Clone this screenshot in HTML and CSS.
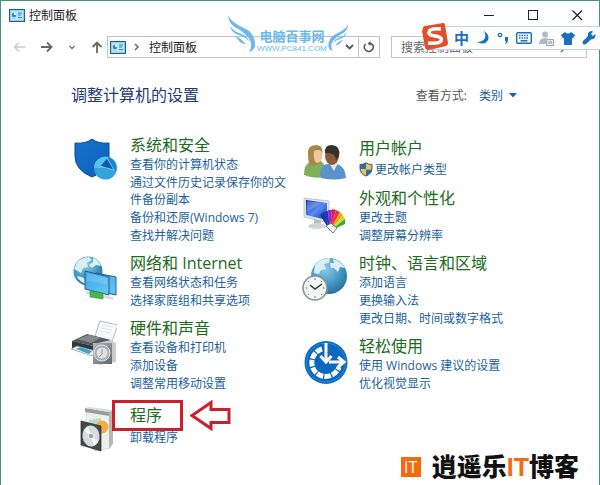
FILE: index.html
```html
<!DOCTYPE html>
<html lang="zh-CN">
<head>
  <meta charset="UTF-8">
  <meta name="viewport" content="width=device-width, initial-scale=1.0">
  <title>控制面板</title>
  <link rel="stylesheet" href="styles.css">
</head>
<body>
  <!-- shared shapes -->
  <svg width="0" height="0" class="defs" aria-hidden="true">
    <defs>
      <symbol id="panel" viewBox="0 0 16 13">
        <rect x="0.5" y="0.5" width="15" height="12" fill="#8fd0f2" stroke="#1f5f8c"/>
        <rect x="2" y="2" width="12" height="9" fill="#b9e5fa"/>
        <circle cx="5" cy="6" r="2.2" fill="#2b86bd"/>
        <path d="M5 6V3.800A2.200 2.200 0 0 1 7.200 6Z" fill="#fff"/>
        <path d="M9 4h4M9 6h3M9 8.500h4" stroke="#2b86bd"/>
        <path d="M3 9.500h4" stroke="#e8c86a"/>
      </symbol>
      <radialGradient id="globe" cx="0.4" cy="0.3" r="0.8">
        <stop offset="0" stop-color="#8ccbe8"/>
        <stop offset="0.6" stop-color="#3f93bd"/>
        <stop offset="1" stop-color="#1d678f"/>
      </radialGradient>
      <linearGradient id="shield" x1="0" y1="0" x2="1" y2="1">
        <stop offset="0" stop-color="#1673cc"/>
        <stop offset="1" stop-color="#0d60b8"/>
      </linearGradient>
      <linearGradient id="screen" x1="0" y1="0" x2="1" y2="1">
        <stop offset="0" stop-color="#3aa4e8"/>
        <stop offset="1" stop-color="#69c8f5"/>
      </linearGradient>
      <linearGradient id="monitor" x1="0" y1="0" x2="1" y2="1">
        <stop offset="0" stop-color="#0a1fa8"/>
        <stop offset="0.5" stop-color="#5a8cf0"/>
        <stop offset="1" stop-color="#1030c0"/>
      </linearGradient>
      <linearGradient id="metal" x1="0" y1="0" x2="1" y2="1">
        <stop offset="0" stop-color="#b5b9bd"/>
        <stop offset="1" stop-color="#5f6468"/>
      </linearGradient>
    </defs>
  </svg>

  <div class="window">
    <header class="titlebar">
      <svg class="panel-icon"><use href="#panel"/></svg>
      <span class="caption">控制面板</span>
      <div class="window-buttons">
        <button type="button" aria-label="最小化"><svg width="11" height="11"><path d="M0 5.500h10" stroke="#222"/></svg></button>
        <button type="button" aria-label="最大化"><svg width="11" height="11"><rect x="0.5" y="0.5" width="9" height="9" fill="none" stroke="#222"/></svg></button>
        <button type="button" aria-label="关闭"><svg width="11" height="11"><path d="M0.500 0.500l9.500 9.500M10 0.500l-9.500 9.500" stroke="#222" stroke-width="1.200"/></svg></button>
      </div>
    </header>

    <nav class="toolbar">
      <button type="button" class="nav-button" aria-label="后退"><svg width="12" height="12"><path d="M12 6H1.500M6 1.500L1.500 6L6 10.500" fill="none" stroke="#c9c9c9" stroke-width="1.500"/></svg></button>
      <button type="button" class="nav-button" aria-label="前进"><svg width="12" height="12"><path d="M0 6h10.500M6 1.500L10.500 6L6 10.500" fill="none" stroke="#666" stroke-width="1.800"/></svg></button>
      <button type="button" class="nav-button" aria-label="最近"><svg width="6" height="5"><path d="M0.500 1L3 3.500L5.500 1" fill="none" stroke="#777" stroke-width="1.400"/></svg></button>
      <button type="button" class="nav-button" aria-label="向上"><svg width="12" height="12"><path d="M6 12V1.500M1.500 6L6 1.500L10.500 6" fill="none" stroke="#666" stroke-width="1.800"/></svg></button>

      <div class="address">
        <svg class="panel-icon"><use href="#panel"/></svg>
        <svg class="crumb" width="5" height="8"><path d="M1 1l3 3l-3 3" fill="none" stroke="#666" stroke-width="1.500"/></svg>
        <span class="path">控制面板</span>
        <button type="button" class="history" aria-label="历史"><svg width="9" height="6"><path d="M1 1l3.500 3.500L8 1" fill="none" stroke="#555" stroke-width="1.800"/></svg></button>
        <button type="button" class="refresh" aria-label="刷新"><svg width="12" height="12"><path d="M2.500 3A4.400 4.400 0 1 0 9.500 3.500Q8.500 2.500 6 2.500" fill="none" stroke="#555" stroke-width="1.500"/><path d="M7.500 0L4.500 2.500L7.500 5Z" fill="#555"/></svg></button>
      </div>
      <div class="search">
        <input type="text" placeholder="搜索控制面板" aria-label="搜索控制面板">
        <svg width="12" height="12"><circle cx="7.500" cy="4.500" r="3.500" fill="none" stroke="#666" stroke-width="1.300"/><path d="M5 7L1 11" stroke="#666" stroke-width="1.600"/></svg>
      </div>
    </nav>

    <main class="content">
      <div class="heading-row">
        <h1>调整计算机的设置</h1>
        <div class="view-by">
          <span>查看方式:</span>
          <a href="#">类别<svg width="8" height="5"><path d="M0 0h8L4 4.500Z" fill="#1565a8"/></svg></a>
        </div>
      </div>

      <div class="columns">
        <div class="column left">
          <section class="category">
            <svg class="icon" viewBox="0 0 46 48">
              <path d="M4 8Q15 9 21 4Q27 9 38 8V23Q37 36 21 42Q4 35 4 21Z" fill="url(#shield)" stroke="#0c4a8c"/>
              <circle cx="34.500" cy="33" r="11.500" fill="#35a3de"/>
              <path d="M23 33A11.500 11.500 0 0 1 37 22L34 33Z" fill="#5cc0ee"/>
              <path d="M37 22A11.500 11.500 0 0 1 45 36L40 31Z" fill="#1c86cc"/>
              <path d="M29 31l7-8l7 12Z" fill="#0f5cab"/>
              <path d="M29 31L36 23L43 35Z" fill="none" stroke="#7fd2f5" stroke-width="0.800"/>
            </svg>
            <div class="text">
              <h2><a href="#">系统和安全</a></h2>
              <a href="#">查看你的计算机状态</a>
              <a href="#">通过文件历史记录保存你的文件备份副本</a>
              <a href="#">备份和还原(Windows 7)</a>
              <a href="#">查找并解决问题</a>
            </div>
          </section>

          <section class="category">
            <svg class="icon" viewBox="0 0 46 48">
              <circle cx="17" cy="18" r="14.500" fill="url(#globe)"/>
              <path d="M6 9q6-5 12-5l3 3l-5 3l1 4l-5 1l-2 5l-5-3l-2-1ZM22 5q6 2 8 8l-5-1l-4 3l-3-3l4-3ZM7 23l6 2l2 6q-6-2-9-7Z" fill="#dceef5"/>
              <path d="M25 20l20 4v18l-18-4Z" fill="url(#screen)" stroke="#235f8f"/>
              <path d="M14 18l24 6v18l-24-6Z" fill="url(#screen)" stroke="#235f8f"/>
              <path d="M16 20l20 5v6l-20-3Z" fill="#fff" opacity="0.15"/>
              <path d="M15 38l27 6v3l-27-6Z" fill="#d8dcdd"/>
              <path d="M19 38l13 2v6l-13-2Z" fill="#45b649" stroke="#2c9135" stroke-width="0.600"/>
            </svg>
            <div class="text">
              <h2><a href="#">网络和 Internet</a></h2>
              <a href="#">查看网络状态和任务</a>
              <a href="#">选择家庭组和共享选项</a>
            </div>
          </section>

          <section class="category">
            <svg class="icon" viewBox="0 0 46 48">
              <path d="M29 3l18 4l-7 19l-17-5Z" fill="#f7f8f9" stroke="#a6aaad" stroke-width="0.800"/>
              <path d="M31 7l11 2M30 10l11 2M29 13l11 2" stroke="#dcdfe1" stroke-width="0.700"/>
              <path d="M1 23L16 16L40 22L27 29Z" fill="#54585c"/>
              <path d="M1 23l26 6v10L1 31Z" fill="#33383c"/>
              <path d="M6 21l12-4l12 3l-10 5Z" fill="#83888c"/>
              <path d="M0 31l6-3l19 5l-4 5Z" fill="#e9eef0" stroke="#8a9094" stroke-width="0.600"/>
              <path d="M5 31l5-2l11 4l-3 3Z" fill="#3ba5cf"/>
              <path d="M22 26l18-4l5 3v19l-16 3l-7-3Z" fill="#c9cccf"/>
              <rect x="22" y="25" width="19" height="21" fill="url(#metal)"/>
              <circle cx="31" cy="35" r="8" fill="#a9adb1" stroke="#e3e5e6"/>
              <circle cx="31" cy="35" r="5.500" fill="#dfe1e3"/>
              <path d="M31 31v5l-3 3" fill="none" stroke="#999"/>
            </svg>
            <div class="text">
              <h2><a href="#">硬件和声音</a></h2>
              <a href="#">查看设备和打印机</a>
              <a href="#">添加设备</a>
              <a href="#">调整常用移动设置</a>
            </div>
          </section>

          <section class="category programs">
            <svg class="icon" viewBox="0 0 46 48">
              <path d="M15 5l25 4v34l-16 3l-9-10Z" fill="#eef0ee" stroke="#c2c4c2" stroke-width="0.600"/>
              <path d="M14 3l24 4v4l-24-4Z" fill="#9b9d9e"/>
              <path d="M38 7l4-2v34l-4 4Z" fill="#b6b8b8"/>
              <path d="M14 3l4-1l24 3l-4 2Z" fill="#dcdede"/>
              <path d="M18 15l12-2v16l-12-2Z" fill="#b8dcc0"/>
              <circle cx="31" cy="22" r="6.500" fill="#f3ae43"/>
              <path d="M10 16l20 5v25L10 40Z" fill="#44494c" stroke="#24282a" stroke-width="0.700"/>
              <ellipse cx="20" cy="31" rx="8.500" ry="10.500" fill="#d9dcde" transform="rotate(-8 20 31)"/>
              <path d="M20 31l-7-5l4-5ZM20 31l7 5l-4 5Z" fill="#f7f8f8"/>
              <circle cx="20" cy="31" r="2.700" fill="#9da2a6" stroke="#fff" stroke-width="0.700"/>
            </svg>
            <div class="text">
              <h2><a href="#">程序</a></h2>
              <a href="#">卸载程序</a>
              <div class="mark-box"></div>
              <svg class="mark-arrow" width="42" height="31"><path d="M2 15.500L21 2.500V9.500H39V22.500H21V28.500Z" fill="none" stroke="#c9202c" stroke-width="3"/></svg>
            </div>
          </section>
        </div>

        <div class="column right">
          <section class="category">
            <svg class="icon" viewBox="0 0 46 48">
              <path d="M2 37Q2 25 10 23h8q6 2 7 15Q14 42 2 37Z" fill="#7fb05a"/>
              <path d="M6 17Q5 7 14 7Q22 7 20 18Q18 23 20 25L9 28Q6 25 6 17Z" fill="#a98748"/>
              <path d="M12 13q8-3 8 3q0 9-5 9q-4-1-3-12Z" fill="#efc79b"/>
              <path d="M19 40Q16 28 25 26h10q8 2 9 14Q32 43 19 40Z" fill="#5c92c9"/>
              <path d="M27 25h9l-4 8Z" fill="#dcebf7"/>
              <ellipse cx="30" cy="18" rx="7" ry="9" fill="#8e5938"/>
              <path d="M23 15Q22 7 30 7Q39 8 37 18l-3 4q0-8-11-7Z" fill="#36312f"/>
            </svg>
            <div class="text">
              <h2><a href="#">用户帐户</a></h2>
              <a href="#" class="with-shield"><svg width="14" height="15" viewBox="0 0 14 15"><path d="M1 2.500Q5 2.500 7 0.800V7.500H1Z" fill="#2c6fae"/><path d="M7 0.800Q9 2.500 13 2.500V7.500H7Z" fill="#f5c04a"/><path d="M1 7.500H7V14Q2 12 1 7.500Z" fill="#f5c04a"/><path d="M7 7.500H13Q12 12 7 14Z" fill="#2c6fae"/><path d="M1 2.500Q5 2.500 7 0.800Q9 2.500 13 2.500V6Q13 12 7 14Q1 12 1 6Z" fill="none" stroke="#3d5a73"/></svg>更改帐户类型</a>
            </div>
          </section>

          <section class="category">
            <svg class="icon" viewBox="0 0 46 48">
              <path d="M2 10l25 3v22L2 29Z" fill="#dfe4ea" stroke="#a4abb3" stroke-width="0.600"/>
              <path d="M4 12l21 3v17L4 27Z" fill="url(#monitor)"/>
              <path d="M5 13l14 2L5 24Z" fill="#fff" opacity="0.25"/>
              <path d="M12 31l7 2v4l-7-2Z" fill="#b9bfc5"/>
              <ellipse cx="15" cy="38" rx="9" ry="3" fill="#cfd4d8"/>
              <path d="M28 43L18 27l4-3Z" fill="#173d9b"/>
              <path d="M28 43L22 24l4-1Z" fill="#3030c8"/>
              <path d="M28 43L26 22l4 0Z" fill="#9a23b8"/>
              <path d="M28 43L30 21l4 1Z" fill="#d91c74"/>
              <path d="M28 43L34 22l4 2Z" fill="#ea3b28"/>
              <path d="M28 43L38 24l3 3Z" fill="#f2a323"/>
              <path d="M28 43L41 27l2 4Z" fill="#d6d62c"/>
              <path d="M28 43L43 31l0 5Z" fill="#38a838"/>
              <path d="M24 38l5-3l6 5l-4 5Z" fill="#f5f5f5" stroke="#555" stroke-width="0.800"/>
            </svg>
            <div class="text">
              <h2><a href="#">外观和个性化</a></h2>
              <a href="#">更改主题</a>
              <a href="#">调整屏幕分辨率</a>
            </div>
          </section>

          <section class="category">
            <svg class="icon" viewBox="0 0 46 48">
              <circle cx="27" cy="23" r="18" fill="url(#globe)"/>
              <path d="M13 12Q19 5 28 5l-1 5l-5 1l2 5l-5 1l-2 4l-5-1ZM31 6q8 2 12 9l-5-1l-2 5l-4-4l-3 0l-1-5l4 0Z" fill="#dceef5"/>
              <circle cx="13" cy="35" r="12" fill="#f4f5f5" stroke="#8c9194" stroke-width="1.600"/>
              <path d="M13 25v2M13 43v2M3.500 35h2M20.500 35h2M6 28l1 1M20 28l-1 1M6 42l1-1M20 42l-1-1" stroke="#777"/>
              <path d="M8 32l5 4l7-5" fill="none" stroke="#33383b" stroke-width="1.500"/>
            </svg>
            <div class="text">
              <h2><a href="#">时钟、语言和区域</a></h2>
              <a href="#">添加语言</a>
              <a href="#">更换输入法</a>
              <a href="#">更改日期、时间或数字格式</a>
            </div>
          </section>

          <section class="category">
            <svg class="icon" viewBox="0 0 46 48">
              <circle cx="24" cy="26.500" r="21.500" fill="#0b68bd"/>
              <circle cx="24" cy="26.500" r="19.500" fill="none" stroke="#2a8bdc" stroke-width="1"/>
              <path d="M20 13A14 14 0 1 0 37 31" fill="none" stroke="#fff" stroke-width="5" stroke-dasharray="6.500 1.200"/>
              <path d="M24 7V25M18.500 20L24 26L29.500 20" fill="none" stroke="#fff" stroke-width="3"/>
              <path d="M27 26H41M36 21L42 26L36 31" fill="none" stroke="#fff" stroke-width="3"/>
            </svg>
            <div class="text">
              <h2><a href="#">轻松使用</a></h2>
              <a href="#">使用 Windows 建议的设置</a>
              <a href="#">优化视觉显示</a>
            </div>
          </section>
        </div>
      </div>
    </main>
  </div>

  <!-- site badge over the address bar -->
  <div class="wings">
    <svg width="30" height="40" viewBox="0 0 32 42"><path d="M1 1Q5 9 17 14Q31 20 30 34Q28 39 24 40Q28 31 23 25Q17 18 9 14Q2 10 1 1ZM3 12Q7 19 16 21Q22 24 24 29Q18 23 12 22Q5 20 3 12ZM8 23Q14 24 20 32Q14 31 12 27Z" fill="#6bb9ec"/></svg>
    <div class="wings-text"><b>电脑百事网</b><span>WWW.PC841.COM</span></div>
    <svg class="wing-right" width="22" height="30" viewBox="0 0 32 42"><path d="M31 1Q27 9 15 14Q1 20 2 34Q4 39 8 40Q4 31 9 25Q15 18 23 14Q30 10 31 1ZM29 12Q25 19 16 21Q10 24 8 29Q14 23 20 22Q27 20 29 12ZM24 23Q18 24 12 32Q18 31 20 27Z" fill="#6bb9ec"/></svg>
  </div>

  <!-- input method bar -->
  <div class="ime">
    <svg class="ime-logo" width="28" height="28" viewBox="0 0 28 28"><path d="M2 5Q2 3 4 3L22 0Q24 0 24 2L27 20Q27 22 25 23L8 27Q5 27 4 25L1 8Z" fill="#e2502b"/><path d="M20 6Q9 5 8 9Q7 12 14 13Q22 14 20 18Q18 21 7 20" fill="none" stroke="#fff" stroke-width="3.500"/></svg>
    <span class="ime-mode">中</span>
    <svg width="14" height="14" viewBox="0 0 14 14"><path d="M8 0Q14 4 12 9Q9 15 1 11Q7 11 9 7Q10 4 8 0Z" fill="#1d6fbe"/></svg>
    <svg width="12" height="12" viewBox="0 0 12 12"><circle cx="3" cy="3" r="1.700" fill="none" stroke="#1d6fbe" stroke-width="1.300"/><path d="M8 5h3v3q0 3-3 4q1-2 1-3H8Z" fill="#1d6fbe"/></svg>
    <svg width="16" height="12" viewBox="0 0 16 12"><rect x="0.700" y="0.700" width="14.600" height="10.600" rx="1" fill="none" stroke="#1d6fbe" stroke-width="1.400"/><path d="M3 3.500h10M3 6h10" stroke="#1d6fbe" stroke-width="1.500" stroke-dasharray="1.500 1"/><path d="M4.500 8.800h7" stroke="#1d6fbe" stroke-width="1.500"/></svg>
    <svg width="15" height="15" viewBox="0 0 15 15"><circle cx="6" cy="3.500" r="3" fill="#b3bcc6"/><path d="M0 13Q0 7 6 7Q12 7 12 13Z" fill="#b3bcc6"/><rect x="7.500" y="8.500" width="7" height="6" fill="#e6eaee" stroke="#a0aab5"/><path d="M10 10v3M12 10v3" stroke="#8c97a3"/></svg>
    <svg width="14" height="13" viewBox="0 0 14 13"><path d="M4 0Q7 3 10 0L14 3L12 6.500L11 6V13H3V6L2 6.500L0 3Z" fill="#1d6fbe"/></svg>
    <svg width="14" height="14" viewBox="0 0 14 14"><path d="M1 13Q0 11 1 10L6 5Q5 1 9 0L11 0.500L9 3L11 5L13.500 3Q14 8 9 8.500L4 13Q2 14 1 13Z" fill="#1d6fbe"/></svg>
  </div>

  <!-- blog badge -->
  <div class="blog">
    <span class="blog-logo">IT</span>
    <span class="blog-name">逍遥乐<em>IT</em>博客</span>
  </div>
</body>
</html>
```
FILE: styles.css
```css
* {
  box-sizing: border-box;
}
body {
  margin: 0;
  position: relative;
  background: #fff;
  font-family: "Open Sans", "Noto Sans CJK SC", sans-serif;
  font-size: 12px;
  color: #222;
}
a {
  color: #1b5f9e;
  text-decoration: none;
}
a:hover {
  text-decoration: underline;
}
button {
  padding: 0;
  border: none;
  background: none;
}
svg {
  display: block;
  flex: none;
}
.defs {
  position: absolute;
}
.window {
  min-height: 100vh;
  border: 1px solid #45947b;
  border-bottom: none;
}
.panel-icon {
  width: 16px;
  height: 13px;
}

/* title bar */
.titlebar {
  display: flex;
  align-items: center;
  height: 28px;
  padding: 0 16px 0 8px;
}
.caption {
  margin-left: 4px;
}
.window-buttons {
  display: flex;
  gap: 33px;
  margin-left: auto;
}

/* navigation */
.toolbar {
  display: flex;
  align-items: center;
  height: 36px;
  padding: 0 12px;
}
.nav-button {
  margin-right: 16px;
}
.nav-button:nth-child(4) {
  margin-right: 4px;
}
.address {
  display: flex;
  align-items: center;
  flex: 1;
  height: 22px;
  padding-left: 2px;
  border: 1px solid #c4c4c4;
}
.crumb {
  margin: 0 10px 0 8px;
}
.history {
  margin-left: auto;
  padding: 0 4px;
}
.refresh {
  display: flex;
  align-items: center;
  justify-content: center;
  width: 21px;
  height: 20px;
  border-left: 1px solid #c4c4c4;
}
.search {
  display: flex;
  align-items: center;
  width: 196px;
  height: 22px;
  margin-left: 11px;
  padding: 0 14px 0 9px;
  border: 1px solid #c4c4c4;
}
.search input {
  flex: 1;
  min-width: 0;
  padding: 0;
  border: none;
  background: none;
  font: inherit;
}
.search input::placeholder {
  color: #666;
}

/* content */
.content {
  padding: 20px 70px 0;
}
.heading-row {
  display: flex;
  align-items: center;
  justify-content: space-between;
  height: 20px;
}
h1 {
  margin: 0;
  font-size: 16px;
  line-height: 20px;
  font-weight: normal;
  color: #1c3b78;
}
.view-by {
  display: flex;
  gap: 12px;
  margin-right: 12px;
  color: #555;
}
.view-by a {
  display: flex;
  align-items: center;
  gap: 6px;
}
.columns {
  display: grid;
  grid-template-columns: 231px 1fr;
  margin-top: 30px;
}
.column {
  display: flex;
  flex-direction: column;
  gap: 9px;
}
.column.left {
  padding-right: 14px;
}
.column.right {
  padding-top: 3px;
}
.category {
  display: flex;
  gap: 13px;
}
.right .category {
  gap: 11px;
}
.icon {
  width: 46px;
  height: 48px;
}
.right .icon {
  margin-bottom: -8px;
}
.text {
  position: relative;
  flex: 1;
}
.text a {
  display: block;
  line-height: 17px;
  margin-top: 1px;
}
h2 {
  margin: 0;
  font-size: 16px;
  line-height: 20px;
  font-weight: normal;
}
.text h2 a {
  margin: 0;
  line-height: 20px;
  color: #1d6b1d;
}
.text .with-shield {
  display: flex;
  align-items: center;
  gap: 2px;
  height: 20px;
}
.programs {
  margin-top: 4px;
}
.programs h2 {
  margin-bottom: 4px;
}
.mark-box {
  position: absolute;
  top: -5px;
  left: -18px;
  width: 71px;
  height: 31px;
  border: 3px solid #c9202c;
}
.mark-arrow {
  position: absolute;
  top: -5px;
  left: 60px;
}

/* overlays */
.wings {
  position: absolute;
  top: 14px;
  left: 227px;
  display: flex;
  align-items: center;
  color: #6bb9ec;
}
.wings-text {
  display: flex;
  flex-direction: column;
  align-items: center;
  margin-top: 14px;
}
.wings-text b {
  font-size: 13px;
  line-height: 16px;
}
.wings-text span {
  font-family: "Liberation Sans", sans-serif;
  font-size: 8px;
  line-height: 10px;
}
.wing-right {
  margin-top: 8px;
}
.ime {
  position: absolute;
  top: 26px;
  right: 0;
  display: flex;
  align-items: center;
  justify-content: space-between;
  width: 172px;
  height: 24px;
  padding: 0 4px 0 25px;
  border: 1px solid #c3d2de;
  border-right: none;
  background: #fff;
}
.ime-logo {
  position: absolute;
  top: -4px;
  left: -8px;
}
.ime-mode {
  font-size: 15px;
  line-height: 20px;
  font-weight: bold;
  color: #1d6fbe;
}
.blog {
  position: absolute;
  right: 21px;
  bottom: 4px;
  display: flex;
  align-items: center;
  gap: 11px;
}
.blog-logo {
  width: 20px;
  height: 20px;
  background: #f56a0c;
  color: #fff;
  font-size: 16px;
  line-height: 20px;
  text-align: center;
}
.blog-name {
  font-family: "Liberation Sans", "Noto Sans CJK SC", sans-serif;
  font-size: 25px;
  line-height: 28px;
  font-weight: 900;
  color: #111;
}
.blog-name em {
  font-style: normal;
  color: #f56a0c;
}
```
